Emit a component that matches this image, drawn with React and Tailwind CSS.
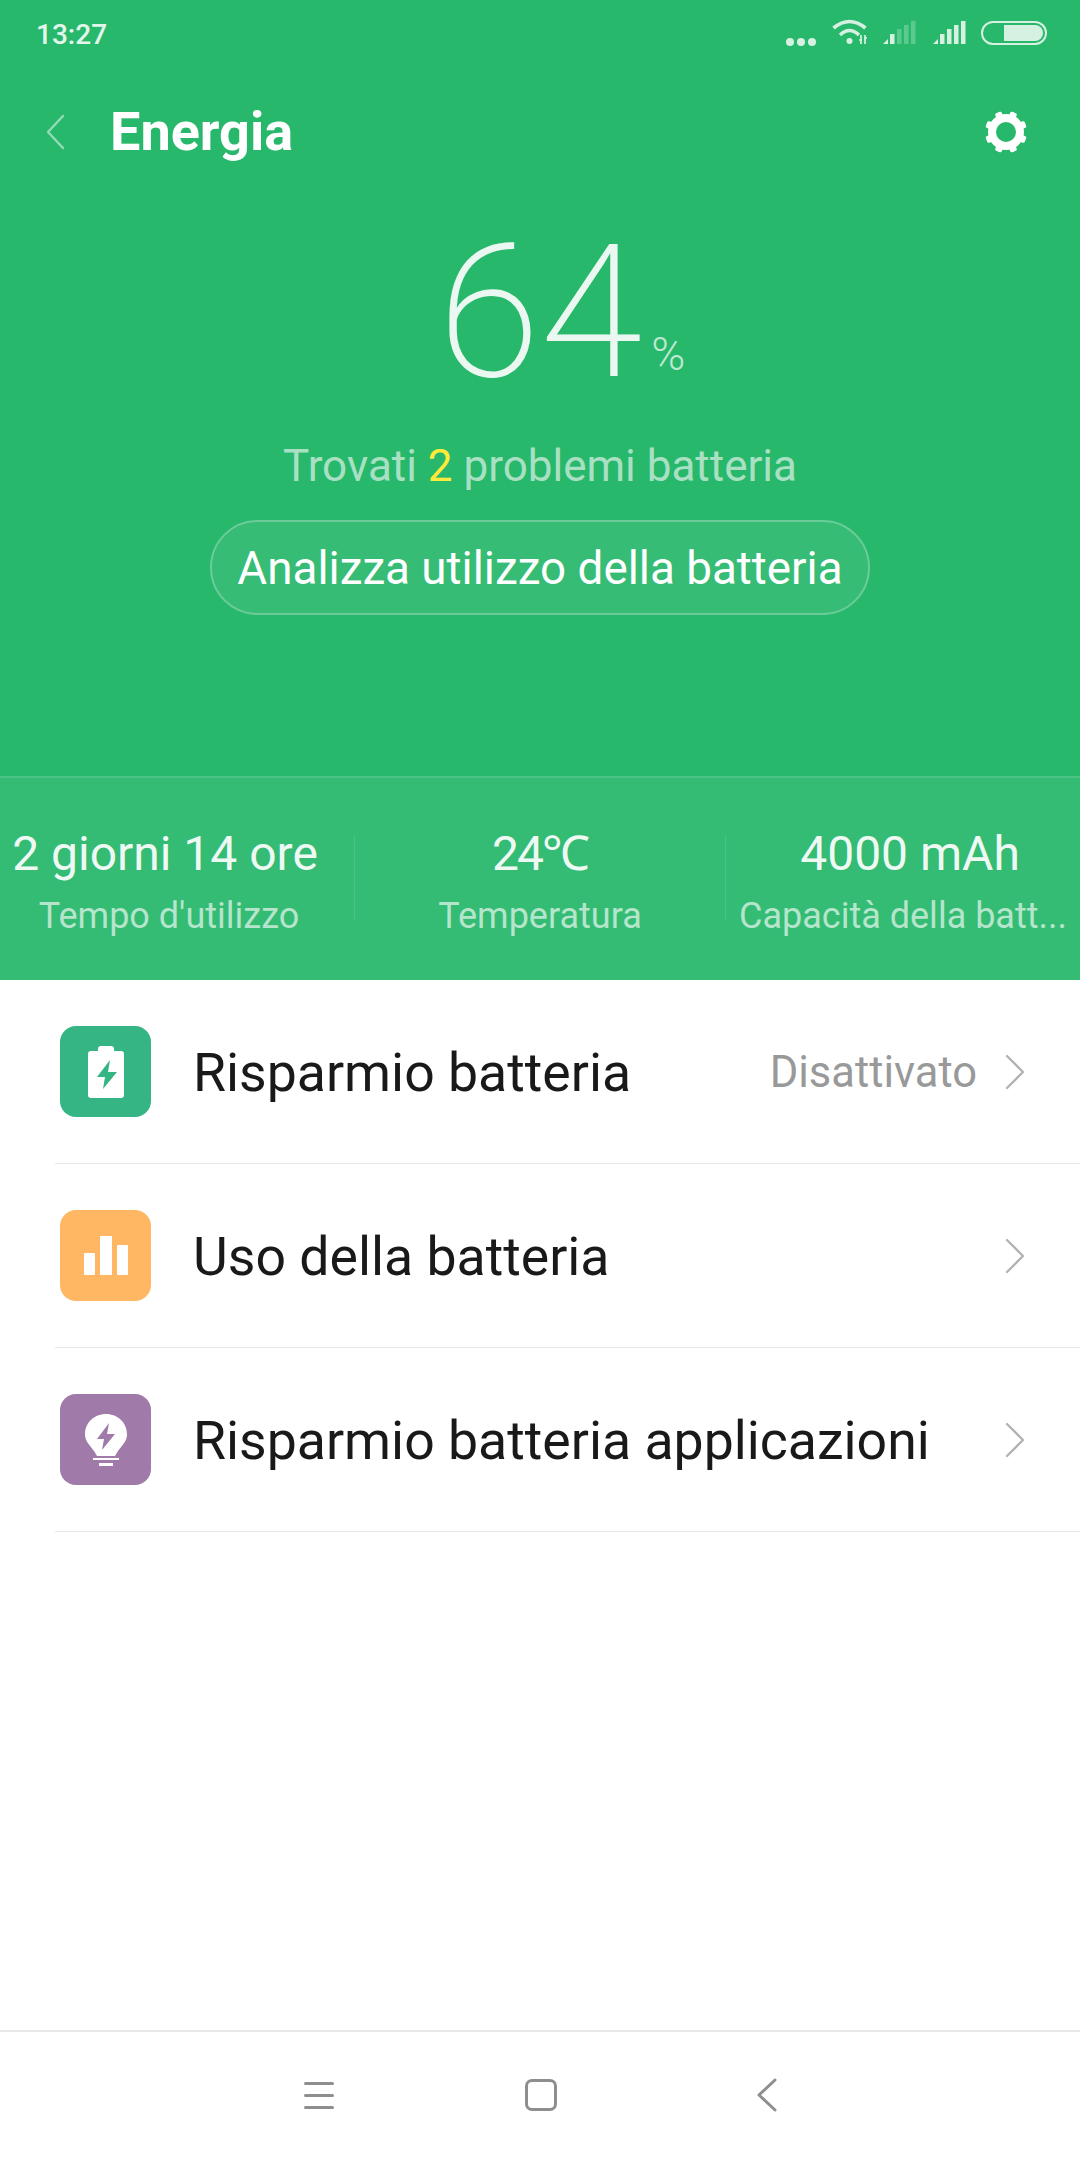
const font = { fontFamily: "Roboto, sans-serif" };

function Chevron({ className = "w-[22px] h-[38px]", color = "#b5b5b5", width = 2.4 }) {
  return (
    <svg viewBox="0 0 22 38" className={className} fill="none">
      <path d="M19 3 L4 19 L19 35" stroke={color} strokeWidth={width} strokeLinecap="round" strokeLinejoin="round" />
    </svg>
  );
}

function RightChevron() {
  return (
    <svg viewBox="0 0 22 36" className="w-[22px] h-[36px]" fill="none">
      <path d="M3 2 L19 18 L3 34" stroke="#b3b3b3" strokeWidth="2.4" strokeLinecap="round" strokeLinejoin="round" />
    </svg>
  );
}

function Gear() {
  const angles = [22.5, 67.5, 112.5, 157.5, 202.5, 247.5, 292.5, 337.5];
  return (
    <svg viewBox="0 0 44 44" className="w-[44px] h-[44px]" fill="none">
      <circle cx="22" cy="22" r="14" stroke="#fff" strokeWidth="8" />
      {angles.map((a) => (
        <rect key={a} x="18.5" y="1" width="7" height="8" rx="1.5" fill="#fff" transform={`rotate(${a} 22 22)`} />
      ))}
    </svg>
  );
}

function Signal({ faded }) {
  return (
    <svg viewBox="0 0 34 24" className="w-[34px] h-[24px]">
      <path d="M0 23 L5 18 V23 Z" fill="#d6f1e2" />
      <rect x="7" y="13" width="4.5" height="10" fill="#d6f1e2" />
      <rect x="14" y="8" width="4.5" height="15" fill="#d6f1e2" opacity={faded ? 0.3 : 1} />
      <rect x="21" y="4" width="4.5" height="19" fill="#d6f1e2" opacity={faded ? 0.3 : 1} />
      <rect x="28" y="0" width="4.5" height="23" fill="#d6f1e2" opacity={faded ? 0.3 : 1} />
    </svg>
  );
}

function StatusIcons() {
  return (
    <div className="flex items-end">
      <div className="flex gap-[3px] mr-[16px]">
        <div className="w-[8px] h-[8px] rounded-full bg-[#d6f1e2]" />
        <div className="w-[8px] h-[8px] rounded-full bg-[#d6f1e2]" />
        <div className="w-[8px] h-[8px] rounded-full bg-[#d6f1e2]" />
      </div>
      <svg viewBox="0 0 36 26" className="w-[36px] h-[26px] mr-[15px] mb-[1px]" fill="none">
        <path d="M1.5 9 Q17.5 -4 33.5 9" stroke="#d6f1e2" strokeWidth="3.6" />
        <path d="M8 16 Q17.5 7 27 16" stroke="#d6f1e2" strokeWidth="3.4" />
        <circle cx="17.5" cy="22" r="3" fill="#d6f1e2" />
        <path d="M29 16 V25 M33 16 V25 M27 21 H30 M32 19 H35" stroke="#d6f1e2" strokeWidth="1.7" />
      </svg>
      <div className="mr-[16px] mb-[1px]"><Signal faded /></div>
      <div className="mr-[14px] mb-[1px]"><Signal /></div>
      <div className="w-[66px] h-[24px] mb-[1px] rounded-full border-[2px] border-[#d6f1e2] p-[2px] flex justify-end">
        <div className="w-[39px] h-full bg-[#d6f1e2] rounded-r-full" />
      </div>
    </div>
  );
}

function Stat({ value, label, className, valueClass = "", labelClass = "" }) {
  return (
    <div className={"flex flex-col items-center min-w-0 " + className}>
      <div className={"text-[48px] leading-[56px] text-[#eef9f3] whitespace-nowrap " + valueClass}>{value}</div>
      <div className={"text-[36px] leading-[42px] mt-[13px] text-[#b5e5cb] whitespace-nowrap " + labelClass}>{label}</div>
    </div>
  );
}

function Row({ icon, bg, title, value }) {
  return (
    <div className="h-[184px] ml-[55px] border-b border-[#e8e8e8] flex items-center">
      <div className={"w-[91px] h-[91px] ml-[5px] rounded-[16px] flex items-center justify-center " + bg}>{icon}</div>
      <div className="ml-[42px] text-[53.6px] leading-[64px] mt-[2px] text-[#191919] flex-1">{title}</div>
      {value && <div className="text-[43.5px] mt-[2px] text-[#999999] mr-[27px]">{value}</div>}
      <div className="mr-[54px] flex"><RightChevron /></div>
    </div>
  );
}

const BatteryIcon = (
  <svg viewBox="0 0 36 52" className="w-[36px] h-[52px]">
    <path d="M10 3 Q10 0 13 0 H23 Q26 0 26 3 V5 H33 Q36 5 36 8 V49 Q36 52 33 52 H3 Q0 52 0 49 V8 Q0 5 3 5 H10 Z" fill="#fff" />
    <path d="M22 14 L9 31 H17 L15 43 L29 26 H20 Z" fill="#34b583" />
  </svg>
);

const BarsIcon = (
  <div className="flex items-end gap-[5px] h-[39px]">
    <div className="w-[11px] h-[22px] bg-white rounded-[1px]" />
    <div className="w-[12px] h-[39px] bg-white rounded-[1px]" />
    <div className="w-[11px] h-[30px] bg-white rounded-[1px]" />
  </div>
);

const BulbIcon = (
  <svg viewBox="0 0 42 52" className="w-[42px] h-[52px]">
    <path d="M21 0 C9 0 0 9 0 20 C0 28 5 31 9 37 L12 42 H30 L33 37 C37 31 42 28 42 20 C42 9 33 0 21 0 Z" fill="#fff" />
    <rect x="8" y="44" width="26" height="2" fill="#fff" />
    <rect x="14" y="49" width="14" height="3" fill="#fff" />
    <path d="M24 9 L12 25 H19 L17 36 L30 20 H22 Z" fill="#a07aa8" />
  </svg>
);

export default function App() {
  return (
    <div className="w-[1080px] h-[2160px] bg-white flex flex-col overflow-hidden" style={font}>
      <div className="h-[776px] bg-[#28b86b] shrink-0 flex flex-col">
        <div className="h-[46px] pl-[36px] pr-[33px] flex items-end justify-between shrink-0">
          <div className="text-[28px] leading-[30px] font-medium text-[#e3f6ec] mb-[-4px]">13:27</div>
          <StatusIcons />
        </div>

        <div className="mt-[62px] h-[48px] pl-[44px] pr-[52px] flex items-center">
          <Chevron color="#93dbb5" className="w-[22px] h-[38px]" />
          <div className="ml-[44px] text-[54px] font-bold text-white flex-1 leading-[48px]">Energia</div>
          <Gear />
        </div>

        <div className="mt-[68px] flex justify-center items-end h-[176px]">
          <div className="relative text-[186px] leading-[176px] font-extralight text-[#ebf8f1]">
            64
            <span className="absolute left-[100%] bottom-[24px] ml-[9px] text-[46px] leading-[44px] font-light text-[#bde8d1]">%</span>
          </div>
        </div>

        <div className="mt-[41px] text-center text-[44px] leading-[50px] text-[#a9e0c3]">
          Trovati <span className="text-[#ffea3c]">2</span> problemi batteria
        </div>

        <div className="mt-[29px] flex justify-center">
          <div className="w-[660px] h-[95px] pt-[3px] rounded-full bg-[#36bc75] border-[2px] border-[#6bcc99] flex items-center justify-center text-[45.8px] text-white">
            Analizza utilizzo della batteria
          </div>
        </div>
      </div>

      <div className="h-[204px] bg-[#34bb74] border-t-[2px] border-[#4cc285] shrink-0 flex items-center">
        <div className="flex w-full mt-[4px]">
          <Stat value="2 giorni 14 ore" label="Tempo d'utilizzo" className="w-[330px]" labelClass="ml-[8px]" />
          <div className="w-px h-[84px] bg-[#49c283] ml-[24px] mt-[10px]" />
          <Stat value="24℃" label="Temperatura" className="w-[370px]" valueClass="tracking-[-2px]" />
          <div className="w-px h-[84px] bg-[#49c283] mt-[10px]" />
          <Stat value="4000 mAh" label="Capacità della batt..." className="w-[354px]" valueClass="ml-[14px]" />
        </div>
      </div>

      <div className="flex-1">
        <Row icon={BatteryIcon} bg="bg-[#34b583]" title="Risparmio batteria" value="Disattivato" />
        <Row icon={BarsIcon} bg="bg-[#ffb763]" title="Uso della batteria" />
        <Row icon={BulbIcon} bg="bg-[#a07aa8]" title="Risparmio batteria applicazioni" />
      </div>

      <div className="h-[130px] border-t-[2px] border-[#e8e8e8] shrink-0 flex items-center justify-center pb-[2px]">
        <div className="flex items-center gap-[191px]">
          <div className="flex flex-col gap-[9px] w-[30px]">
            <div className="h-[3px] bg-[#8e8e8e] rounded-full" />
            <div className="h-[3px] bg-[#8e8e8e] rounded-full" />
            <div className="h-[3px] bg-[#8e8e8e] rounded-full" />
          </div>
          <div className="w-[32px] h-[32px] border-[3px] border-[#8e8e8e] rounded-[7px]" />
          <svg viewBox="0 0 20 34" className="w-[20px] h-[34px] ml-[9px]" fill="none">
            <path d="M18 2 L2 17 L18 32" stroke="#8e8e8e" strokeWidth="3" strokeLinecap="round" strokeLinejoin="round" />
          </svg>
        </div>
      </div>
    </div>
  );
}
